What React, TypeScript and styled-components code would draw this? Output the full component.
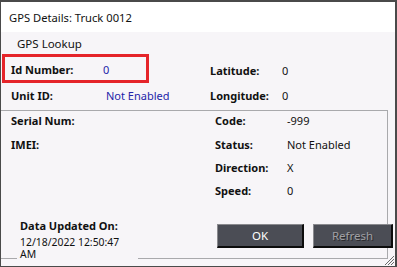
import React from "react";
import styled, { createGlobalStyle } from "styled-components";

const Global = createGlobalStyle`
  html, body { margin: 0; padding: 0; background: #ffffff; }
  body { font-family: "Noto Sans", "Open Sans", sans-serif; }
`;

const Window = styled.div`
  width: 397px;
  height: 267px;
  box-sizing: border-box;
  border: 1px solid #4a4a4a;
  border-top-width: 2px;
  border-right-width: 2px;
  display: flex;
  flex-direction: column;
  background: #f7f5f8;
  position: relative;
  overflow: hidden;
`;

const TitleBar = styled.div`
  height: 30px;
  flex: none;
  background: #ffffff;
  display: flex;
  align-items: center;
  padding-left: 8px;
  padding-top: 1px;
  box-sizing: border-box;
  font-size: 11.2px;
  color: #111;
`;

const Body = styled.div`
  flex: 1;
  display: flex;
  flex-direction: column;
`;

const Heading = styled.div`
  height: 22px;
  display: flex;
  align-items: center;
  padding-left: 16px;
  font-size: 11.5px;
  color: #111;
`;

const TopGrid = styled.div`
  display: grid;
  grid-template-columns: 209px 1fr;
  grid-template-rows: 29px 27px;
`;

const LeftCell = styled.div<{ $highlight?: boolean }>`
  display: flex;
  align-items: center;
  margin-left: 1px;
  width: 147px;
  box-sizing: border-box;
  padding-left: ${(p) => (p.$highlight ? "6px" : "9px")};
  padding-top: ${(p) => (p.$highlight ? "1px" : "0")};
  padding-bottom: ${(p) => (p.$highlight ? "0" : "2px")};
  border: ${(p) => (p.$highlight ? "3px solid #e5242a" : "none")};
`;

const RightCell = styled.div<{ $labelWidth: number; $shift: number }>`
  display: grid;
  grid-template-columns: ${(p) => p.$labelWidth}px 1fr;
  align-items: center;
  padding-top: ${(p) => Math.max(p.$shift, 0)}px;
  padding-bottom: ${(p) => Math.max(-p.$shift, 0)}px;
`;

const Label = styled.span<{ $width?: number }>`
  font-size: 11px;
  font-weight: 700;
  color: #111;
  width: ${(p) => (p.$width ? `${p.$width}px` : "auto")};
  flex: none;
  white-space: nowrap;
`;

const Value = styled.span<{ $blue?: boolean }>`
  font-size: 11px;
  color: ${(p) => (p.$blue ? "#2424a8" : "#111")};
  white-space: nowrap;
`;

const Group = styled.div`
  margin-right: 7px;
  height: 149px;
  box-sizing: border-box;
  border: 1px solid #a9a9ac;
  border-left: none;
  display: flex;
  flex-direction: column;
`;

const GroupGrid = styled.div`
  display: grid;
  grid-template-columns: 204px 1fr;
  margin-top: -2px;
`;

const Column = styled.div<{ $pad: number }>`
  display: flex;
  flex-direction: column;
  padding-left: ${(p) => p.$pad}px;
`;

const Row = styled.div`
  height: 23.4px;
  display: flex;
  align-items: center;
`;

const Footer = styled.div`
  margin-top: auto;
  display: flex;
  align-items: flex-end;
  justify-content: space-between;
  margin-bottom: -4px;
  margin-right: -6px;
`;

const DataPanel = styled.div`
  margin-left: 16px;
  width: 121px;
  background: #f7f5f8;
  display: flex;
  flex-direction: column;
  padding-left: 3px;
  padding-bottom: 2px;
  box-sizing: border-box;
  position: relative;
`;

const DataTitle = styled(Label)`
  line-height: 13px;
  margin-bottom: 4px;
`;

const DataValue = styled(Value)`
  white-space: normal;
  max-width: 104px;
  font-size: 10.4px;
  line-height: 12px;
`;

const Buttons = styled.div`
  display: flex;
  gap: 9px;
  margin-bottom: 14px;
`;

const Button = styled.button<{ $width: number; $disabled?: boolean }>`
  width: ${(p) => p.$width}px;
  height: 24px;
  box-sizing: border-box;
  background: #4b4d55;
  border: 1px solid #0c0c0c;
  border-top-color: #8a8a8e;
  border-left-color: #8a8a8e;
  border-bottom-width: 2px;
  border-right-width: 2px;
  color: ${(p) => (p.$disabled ? "#a0a0a4" : "#ffffff")};
  text-shadow: ${(p) => (p.$disabled ? "1px 1px 0 #2a2a2e" : "none")};
  font-family: "Noto Sans", sans-serif;
  font-size: 11.5px;
  padding: 0;
  display: flex;
  align-items: center;
  justify-content: center;
`;

const Grip = styled.svg`
  position: absolute;
  right: 0;
  bottom: 0;
`;

export default function App() {
  return (
    <>
      <Global />
      <Window>
        <TitleBar>GPS Details: Truck 0012</TitleBar>
        <Body>
          <Heading>GPS Lookup</Heading>
          <TopGrid>
            <LeftCell $highlight>
              <Label $width={92}>Id Number:</Label>
              <Value $blue>0</Value>
            </LeftCell>
            <RightCell $labelWidth={72} $shift={3}>
              <Label>Latitude:</Label>
              <Value>0</Value>
            </RightCell>
            <LeftCell>
              <Label $width={95}>Unit ID:</Label>
              <Value $blue>Not Enabled</Value>
            </LeftCell>
            <RightCell $labelWidth={72} $shift={-2}>
              <Label>Longitude:</Label>
              <Value>0</Value>
            </RightCell>
          </TopGrid>
          <Group>
            <GroupGrid>
              <Column $pad={10}>
                <Row>
                  <Label>Serial Num:</Label>
                </Row>
                <Row>
                  <Label>IMEI:</Label>
                </Row>
              </Column>
              <Column $pad={10}>
                <Row>
                  <Label $width={72}>Code:</Label>
                  <Value>-999</Value>
                </Row>
                <Row>
                  <Label $width={72}>Status:</Label>
                  <Value>Not Enabled</Value>
                </Row>
                <Row>
                  <Label $width={72}>Direction:</Label>
                  <Value>X</Value>
                </Row>
                <Row>
                  <Label $width={72}>Speed:</Label>
                  <Value>0</Value>
                </Row>
              </Column>
            </GroupGrid>
            <Footer>
              <DataPanel>
                <DataTitle>Data Updated On:</DataTitle>
                <DataValue>12/18/2022 12:50:47 AM</DataValue>
              </DataPanel>
              <Buttons>
                <Button $width={87}>OK</Button>
                <Button $width={80} $disabled disabled>
                  Refresh
                </Button>
              </Buttons>
            </Footer>
          </Group>
        </Body>
        <Grip width="12" height="12" viewBox="0 0 12 12">
          <path d="M11 2 L2 11 M11 5 L5 11 M11 8 L8 11" stroke="#6a6a6a" strokeWidth="1" />
        </Grip>
      </Window>
    </>
  );
}
